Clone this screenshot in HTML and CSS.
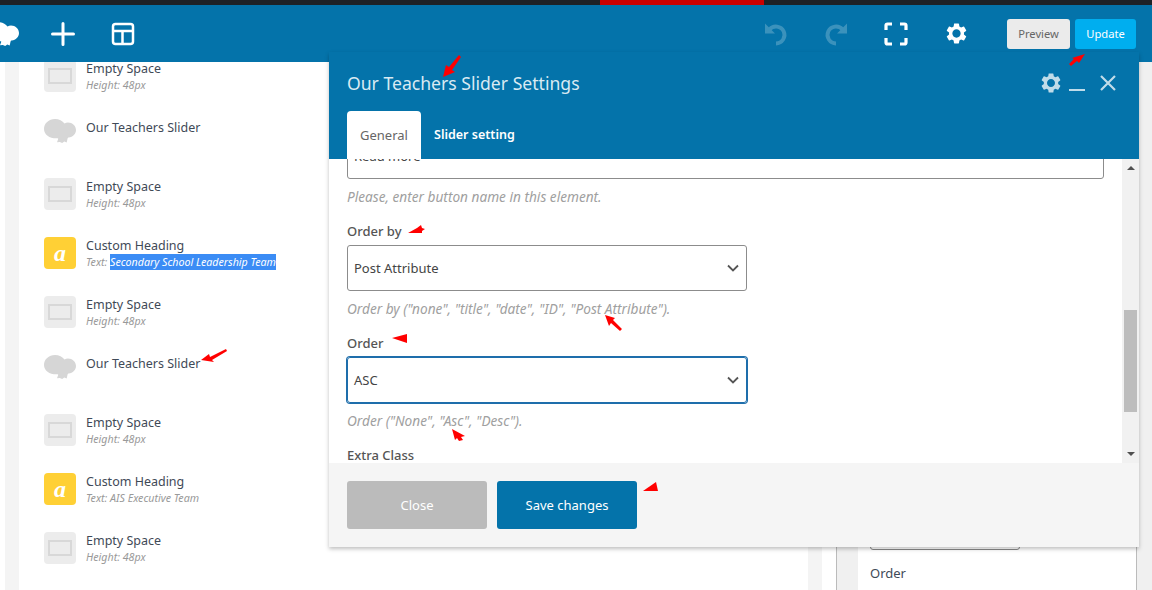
FILE: index.html
```html
<!DOCTYPE html>
<html lang="en">
<head>
    <meta charset="UTF-8">
    <meta name="viewport" content="width=device-width, initial-scale=1.0">
    <title>Our Teachers Slider Settings</title>
    <link rel="stylesheet" href="styles.css">
</head>
<body>
    <svg class="defs" xmlns="http://www.w3.org/2000/svg" width="0" height="0">
        <symbol id="cloud" viewBox="0 0 32 24">
            <path d="M11 0c4 0 7.500 1.800 9.500 4.600 1-.6 2.200-1 3.500-1 4.400 0 8 3.200 8 7.400 0 4-3.200 7-7.200 7.400-.8 0-1 .4-1.300 1.400l-.8 3.600-2.400-.8-2.100 1.400-2.400-1-2.800.2 1.200-3.200c.1-.5-.2-.7-.7-.7C6.200 19.800 0 16 0 10 0 4.400 4.800 0 11 0z"/>
        </symbol>
        <symbol id="gear" viewBox="0 0 24 24">
            <path d="M19.140 12.940c.04-.3.06-.61.06-.94 0-.32-.02-.64-.07-.94l2.030-1.580a.49.49 0 0 0 .12-.61l-1.920-3.320a.488.488 0 0 0-.59-.22l-2.390.96c-.5-.38-1.030-.7-1.620-.94l-.36-2.540a.484.484 0 0 0-.48-.41h-3.840c-.24 0-.43.17-.47.41l-.36 2.540c-.59.24-1.130.57-1.620.94l-2.390-.96c-.22-.08-.47 0-.59.22L2.740 8.870c-.12.21-.08.47.12.61l2.030 1.580c-.05.3-.09.63-.09.94s.02.64.07.94l-2.030 1.580a.49.49 0 0 0-.12.61l1.920 3.320c.12.22.37.29.59.22l2.390-.96c.5.38 1.030.7 1.620.94l.36 2.540c.05.24.24.41.48.41h3.840c.24 0 .44-.17.47-.41l.36-2.540c.59-.24 1.130-.56 1.620-.94l2.390.96c.22.08.47 0 .59-.22l1.920-3.320c.12-.22.07-.47-.12-.61l-2.010-1.580zM12 16c-2.200 0-4-1.800-4-4s1.800-4 4-4 4 1.800 4 4-1.800 4-4 4z"/>
        </symbol>
        <symbol id="chevron" viewBox="0 0 12 8">
            <path d="M1 1.500l5 5 5-5" fill="none" stroke="#555" stroke-width="1.800"/>
        </symbol>
    </svg>

    <div class="topstrip"><span class="topstrip-red"></span></div>

    <header class="toolbar">
        <svg class="logo"><use href="#cloud"/></svg>
        <button class="tool">
            <svg width="24" height="24" viewBox="0 0 24 24"><path d="M12 1.500v21M1.500 12h21" stroke="#fff" stroke-width="3" stroke-linecap="round"/></svg>
        </button>
        <button class="tool">
            <svg width="24" height="24" viewBox="0 0 24 24" fill="none" stroke="#fff" stroke-width="2.500"><rect x="2" y="2" width="20" height="20" rx="2.500"/><path d="M2 9h20M11.500 9v13"/></svg>
        </button>
        <div class="spacer"></div>
        <button class="tool faded">
            <svg width="24" height="24" viewBox="0 0 24 24"><path d="M5.500 7.500A8.500 8.500 0 1 1 12 21.500" fill="none" stroke="#fff" stroke-width="3.800"/><path d="M1 1.500l0 10 10 0z" fill="#fff"/></svg>
        </button>
        <button class="tool faded">
            <svg width="24" height="24" viewBox="0 0 24 24"><path d="M18.500 7.500A8.500 8.500 0 1 0 12 21.500" fill="none" stroke="#fff" stroke-width="3.800"/><path d="M23 1.500l0 10-10 0z" fill="#fff"/></svg>
        </button>
        <button class="tool">
            <svg width="24" height="24" viewBox="0 0 24 24" fill="none" stroke="#fff" stroke-width="3.200"><path d="M2 8V3.500Q2 2 3.500 2H8M16 2h4.500Q22 2 22 3.500V8M22 16v4.500q0 1.500-1.500 1.500H16M8 22H3.500Q2 22 2 20.500V16"/></svg>
        </button>
        <button class="tool">
            <svg class="icon-fill" width="25" height="25"><use href="#gear"/></svg>
        </button>
        <button class="btn-preview">Preview</button>
        <button class="btn-update">Update</button>
    </header>

    <main class="page">
        <section class="canvas">
            <div class="item"><span class="ico-space"><i></i></span><div><div class="item-title">Empty Space</div><div class="item-sub">Height: 48px</div></div></div>
            <div class="item"><svg class="ico-cloud"><use href="#cloud"/></svg><div><div class="item-title">Our Teachers Slider</div></div></div>
            <div class="item"><span class="ico-space"><i></i></span><div><div class="item-title">Empty Space</div><div class="item-sub">Height: 48px</div></div></div>
            <div class="item"><span class="ico-heading">a</span><div><div class="item-title">Custom Heading</div><div class="item-sub">Text: <span class="selected">Secondary School Leadership Team</span></div></div></div>
            <div class="item"><span class="ico-space"><i></i></span><div><div class="item-title">Empty Space</div><div class="item-sub">Height: 48px</div></div></div>
            <div class="item"><svg class="ico-cloud"><use href="#cloud"/></svg><div><div class="item-title">Our Teachers Slider</div></div></div>
            <div class="item"><span class="ico-space"><i></i></span><div><div class="item-title">Empty Space</div><div class="item-sub">Height: 48px</div></div></div>
            <div class="item"><span class="ico-heading">a</span><div><div class="item-title">Custom Heading</div><div class="item-sub">Text: AIS Executive Team</div></div></div>
            <div class="item"><span class="ico-space"><i></i></span><div><div class="item-title">Empty Space</div><div class="item-sub">Height: 48px</div></div></div>
        </section>
        <aside class="side">
            <div class="side-panel">
                <div class="side-box"></div>
                <div class="side-label">Order</div>
                <div class="side-box short"></div>
            </div>
        </aside>
    </main>

    <div class="modal">
        <div class="modal-head">
            <div class="modal-titlebar">
                <h2 class="modal-title">Our Teachers Slider Settings</h2>
                <svg class="modal-gear" width="24" height="24"><use href="#gear"/></svg>
                <span class="modal-min"></span>
                <svg class="modal-close" width="18" height="18" viewBox="0 0 18 18"><path d="M2 2l14 14M16 2L2 16" stroke="#fff" stroke-width="2.200"/></svg>
            </div>
            <div class="tabs">
                <span class="tab active">General</span>
                <span class="tab">Slider setting</span>
            </div>
        </div>
        <div class="modal-body">
            <div class="form">
                <div class="input">Read more</div>
                <p class="help">Please, enter button name in this element.</p>
                <label class="label">Order by</label>
                <div class="input select">Post Attribute<svg width="12" height="8"><use href="#chevron"/></svg></div>
                <p class="help">Order by ("none", "title", "date", "ID", "Post Attribute").</p>
                <label class="label">Order</label>
                <div class="input select focus">ASC<svg width="12" height="8"><use href="#chevron"/></svg></div>
                <p class="help">Order ("None", "Asc", "Desc").</p>
                <label class="label">Extra Class</label>
            </div>
            <div class="scrollbar">
                <span class="arrow up"></span>
                <span class="thumb"></span>
                <span class="arrow down"></span>
            </div>
        </div>
        <div class="modal-foot">
            <button class="btn-close">Close</button>
            <button class="btn-save">Save changes</button>
        </div>
    </div>

    <!-- red marks drawn on top of the screenshot -->
    <svg class="marks" width="1152" height="590" viewBox="0 0 1152 590" fill="#f00">
        <path d="M443 77l3-12 3 2 10-12 2 2-9 13 3 2z"/>
        <path d="M1085 54l-6 9-2-2-6 5-2-2 5-5-2-1z"/>
        <path d="M408 233l9-5 4-3 1 3 3 1-3 2 0 2z"/>
        <path d="M605 315l10 3-2 2 9 9-2 2-9-8-2 3z"/>
        <path d="M392 338l15-4v9z"/>
        <path d="M452 429l13 7-4 1 2 3-4 1-2-3-2 2z"/>
        <path d="M201 360l8-6 1 3 16-8 1 2-15 9 2 2z"/>
        <path d="M643 491l13-9 2 9z"/>
    </svg>
</body>
</html>
```

FILE: styles.css
```css
* {
    box-sizing: border-box;
}

body {
    margin: 0;
    width: 1152px;
    height: 590px;
    overflow: hidden;
    font-family: "Noto Sans", "Open Sans", sans-serif;
    font-size: 13px;
    color: #444;
    background: #fff;
}

button {
    font-family: inherit;
    border: none;
    padding: 0;
    cursor: pointer;
}

.defs {
    position: absolute;
}

.topstrip {
    height: 5px;
    background: #1e2227;
    padding-left: 600px;
}

.topstrip-red {
    display: block;
    width: 164px;
    height: 5px;
    background: #cc0000;
}

.toolbar {
    display: flex;
    align-items: center;
    height: 57px;
    background: #0473aa;
    padding-right: 16px;
}

.logo {
    width: 32px;
    height: 24px;
    margin-left: -13px;
    margin-right: 14px;
    fill: #fff;
}

.tool {
    display: flex;
    align-items: center;
    justify-content: center;
    width: 60px;
    height: 57px;
    background: none;
}

.tool.faded {
    opacity: 0.22;
}

.icon-fill {
    fill: #fff;
}

.spacer {
    flex: 1;
}

.btn-preview,
.btn-update {
    height: 30px;
    border-radius: 3px;
    font-size: 11.200px;
}

.btn-preview {
    width: 63px;
    margin-left: 21px;
    background: #ebebeb;
    color: #666;
}

.btn-update {
    width: 61px;
    margin-left: 5px;
    background: #00aeef;
    color: #fff;
}

.page {
    display: flex;
    height: 528px;
    padding-left: 5px;
    overflow: hidden;
}

.canvas {
    width: 817px;
    flex: none;
    padding-left: 25px;
    border-left: 14px solid #f4f4f4;
    border-right: 14px solid #f4f4f4;
}

.item {
    display: flex;
    gap: 10px;
    height: 59px;
}

.item:first-child {
    margin-top: -2px;
}

.item-title {
    font-size: 12.500px;
    line-height: 18px;
    color: #3f4a57;
}

.item-sub {
    font-size: 10.670px;
    line-height: 14px;
    font-style: italic;
    color: #999;
}

.selected {
    background: #3b8cf5;
    color: #fff;
    padding: 1px 0;
}

.ico-space {
    display: flex;
    align-items: center;
    justify-content: center;
    width: 32px;
    height: 32px;
    border-radius: 4px;
    background: #ececec;
}

.ico-space i {
    display: block;
    width: 24px;
    height: 16px;
    border: 2px solid #d8d8d8;
}

.ico-cloud {
    width: 32px;
    height: 24px;
    fill: #d6d6d6;
}

.ico-heading {
    display: flex;
    align-items: center;
    justify-content: center;
    width: 32px;
    height: 32px;
    border-radius: 4px;
    background: #ffd035;
    color: #fff;
    font-family: "Liberation Serif", serif;
    font-style: italic;
    font-weight: bold;
    font-size: 24px;
}

.side {
    flex: 1;
    margin-left: 14px;
    padding-left: 21px;
    border-left: 1px solid #bbb;
    background: #f0f0f0;
}

.side-panel {
    width: 279px;
    height: 528px;
    padding: 440px 0 0 12px;
    background: #fff;
    border-right: 1px solid #bbb;
}

.side-box {
    width: 150px;
    height: 48px;
    border: 1px solid #888;
    border-radius: 3px;
}

.side-box.short {
    width: 73px;
    margin-left: 2px;
}

.side-label {
    margin-top: 15px;
    margin-bottom: 8px;
    line-height: 17px;
    color: #3f4a57;
}

.modal {
    position: absolute;
    left: 329px;
    top: 52px;
    width: 810px;
    height: 495px;
    display: flex;
    flex-direction: column;
    background: #fff;
    box-shadow: 0 2px 4px rgba(0, 0, 0, 0.25);
}

.modal-head {
    height: 107px;
    background: #0473aa;
    padding-left: 18px;
}

.modal-titlebar {
    display: flex;
    align-items: center;
    height: 59px;
    padding-top: 2px;
    padding-right: 22px;
}

.modal-title {
    flex: 1;
    margin: 0;
    font-size: 17.600px;
    font-weight: 400;
    color: #d9eaf3;
}

.modal-gear {
    fill: #fff;
    opacity: 0.75;
    margin-top: 1px;
    margin-left: 1px;
}

.modal-min {
    width: 16px;
    height: 2px;
    margin: 15px 14px 0 6px;
    background: #fff;
    opacity: 0.75;
}

.modal-close {
    opacity: 0.75;
    margin-top: 1px;
}

.tabs {
    display: flex;
}

.tab {
    height: 48px;
    line-height: 48px;
    padding: 0 13px;
    font-size: 12.500px;
    font-weight: 600;
    color: #fff;
}

.tab.active {
    position: relative;
    z-index: 1;
    width: 74px;
    font-size: 13px;
    background: #fff;
    border-radius: 4px 4px 0 0;
    color: #666;
    font-weight: 400;
}

.modal-body {
    flex: 1;
    display: flex;
    overflow: hidden;
}

.form {
    flex: 1;
    padding: 0 18px;
    margin-top: -26px;
}

.input {
    display: flex;
    align-items: center;
    justify-content: space-between;
    height: 46px;
    padding: 0 7px 0 6px;
    border: 1px solid #8c8c8c;
    border-radius: 3px;
    color: #444;
}

.select {
    width: 400px;
}

.select.focus {
    border-color: #1e6eab;
    box-shadow: 0 0 0 1px #1e6eab;
}

.help {
    margin: 9px 0 0;
    font-size: 13.650px;
    line-height: 18px;
    font-style: italic;
    color: #a0a0a0;
}

.label {
    display: block;
    margin: 16px 0 4px;
    line-height: 19px;
    font-weight: 500;
    color: #555;
}

.scrollbar {
    display: flex;
    flex-direction: column;
    align-items: center;
    width: 17px;
    padding-top: 7px;
    background: #f1f1f1;
}

.arrow {
    width: 0;
    height: 0;
    border-left: 4px solid transparent;
    border-right: 4px solid transparent;
}

.arrow.up {
    border-bottom: 4px solid #505050;
}

.arrow.down {
    border-top: 4px solid #505050;
    margin-top: 40px;
}

.thumb {
    width: 13px;
    height: 102px;
    margin-top: 140px;
    background: #bdbdbd;
}

.modal-foot {
    display: flex;
    gap: 10px;
    height: 84px;
    padding: 18px 18px 0;
    background: #f5f5f5;
}

.btn-close,
.btn-save {
    width: 140px;
    height: 48px;
    border-radius: 3px;
    font-size: 13px;
    color: #fff;
}

.btn-close {
    background: #bbb;
}

.btn-save {
    background: #0473aa;
}

.marks {
    position: absolute;
    left: 0;
    top: 0;
    pointer-events: none;
}
```
